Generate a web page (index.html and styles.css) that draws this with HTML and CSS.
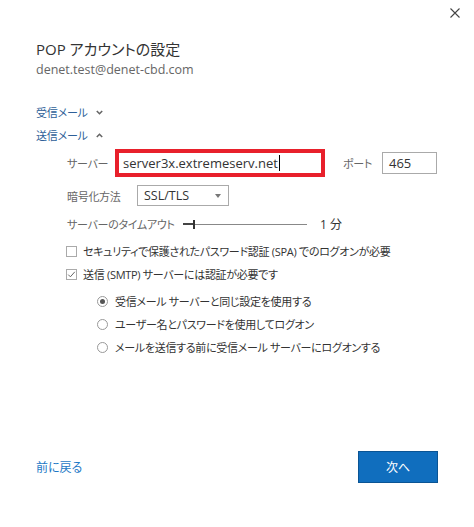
FILE: index.html
```html
<!DOCTYPE html>
<html lang="ja">
<head>
<meta charset="utf-8">
<title>POP アカウントの設定</title>
<link rel="stylesheet" href="styles.css">
</head>
<body>
<div class="dialog">
  <div class="topbar">
    <button class="close" aria-label="閉じる">
      <svg width="10" height="10" viewBox="0 0 10 10"><path d="M0.5 0.5 L9.5 9.5 M9.5 0.5 L0.5 9.5" stroke="#444" stroke-width="1.1" fill="none"/></svg>
    </button>
  </div>
  <h1 class="title">POP アカウントの設定</h1>
  <div class="email">denet.test@denet-cbd.com</div>

  <div class="toggle toggle-first">受信メール
    <svg class="chev" width="7" height="5" viewBox="0 0 7 5"><path d="M0.8 1 L3.5 3.7 L6.2 1" stroke="#666" stroke-width="1.6" fill="none"/></svg>
  </div>
  <div class="toggle">送信メール
    <svg class="chev" width="7" height="5" viewBox="0 0 7 5"><path d="M0.8 4 L3.5 1.3 L6.2 4" stroke="#666" stroke-width="1.6" fill="none"/></svg>
  </div>

  <div class="outgoing">
    <div class="row row-server">
      <span class="label lbl-server">サーバー</span>
      <div class="textbox server-box">server3x.extremeserv.net<span class="caret"></span></div>
      <span class="label lbl-port">ポート</span>
      <div class="textbox port-box">465</div>
    </div>
    <div class="row row-enc">
      <span class="label lbl-enc">暗号化方法</span>
      <div class="select">SSL/TLS<span class="arrow"></span></div>
    </div>
    <div class="row row-timeout">
      <span class="label lbl-timeout">サーバーのタイムアウト</span>
      <div class="slider"><span class="fill"></span><span class="thumb"></span></div>
      <span class="slider-value">1 分</span>
    </div>

    <div class="check check-first"><span class="box"></span><span>セキュリティで保護されたパスワード認証 (SPA) でのログオンが必要</span></div>
    <div class="check"><span class="box checked">
      <svg width="9" height="9" viewBox="0 0 9 9"><path d="M1.2 4.6 L3.4 6.8 L7.8 1.8" stroke="#666" stroke-width="1" fill="none"/></svg>
    </span><span>送信 (SMTP) サーバーには認証が必要です</span></div>

    <div class="radios">
      <div class="radio"><span class="circle on"></span><span>受信メール サーバーと同じ設定を使用する</span></div>
      <div class="radio"><span class="circle"></span><span>ユーザー名とパスワードを使用してログオン</span></div>
      <div class="radio"><span class="circle"></span><span>メールを送信する前に受信メール サーバーにログオンする</span></div>
    </div>
  </div>

  <div class="footer">
    <a class="back" href="#">前に戻る</a>
    <button class="next">次へ</button>
  </div>
</div>
</body>
</html>
```

FILE: styles.css
```css
* { box-sizing: border-box; }
html, body { margin: 0; padding: 0; background: #fff; }
body {
  font-family: "Open Sans", "Noto Sans CJK JP", sans-serif;
  font-size: 11px;
  color: #333;
  font-feature-settings: "palt";
}
.dialog {
  width: 474px;
  height: 527px;
  display: flex;
  flex-direction: column;
  padding: 0 36px 44px 36px;
}
.topbar {
  display: flex;
  justify-content: flex-end;
  margin-right: -22px;
  padding-top: 8px;
}
.close {
  border: 0;
  background: none;
  padding: 0;
  width: 10px;
  height: 10px;
  display: block;
}
.close svg { display: block; }
.title {
  margin: 20px 0 0 0;
  font-size: 15px;
  font-weight: normal;
  line-height: 22px;
  color: #333;
}
.email {
  line-height: 20px;
  font-size: 12.5px;
  color: #666;
}
.toggle {
  line-height: 23px;
  font-size: 11px;
  letter-spacing: -0.2px;
  color: #2e5f98;
  display: flex;
  align-items: center;
  gap: 8px;
}
.toggle-first { margin-top: 21px; }
.chev { display: block; }
.outgoing { padding-left: 31px; }
.row { display: flex; align-items: center; }
.label { color: #666; white-space: nowrap; letter-spacing: -0.3px; }
.row-server { margin-top: 2px; }
.lbl-server { width: 48px; }
.textbox {
  border: 1px solid #aaa;
  color: #333;
  display: flex;
  align-items: center;
}
.server-box {
  width: 210px;
  height: 28px;
  border: 4px solid #e8202b;
  padding-left: 4px;
  font-size: 13px;
}
.caret {
  display: inline-block;
  width: 1px;
  height: 16px;
  background: #000;
  margin-left: 1px;
}
.lbl-port { margin-left: 18px; width: 39px; }
.port-box {
  width: 55px;
  height: 22px;
  padding-left: 6px;
  font-size: 13px;
}
.row-enc { margin-top: 8px; }
.lbl-enc { width: 70px; }
.select {
  width: 92px;
  height: 21px;
  border: 1px solid #aaa;
  display: flex;
  align-items: center;
  justify-content: space-between;
  padding: 0 7px 0 6px;
  font-size: 12.5px;
  color: #333;
}
.arrow {
  width: 0;
  height: 0;
  border-left: 3.5px solid transparent;
  border-right: 3.5px solid transparent;
  border-top: 4px solid #777;
}
.row-timeout { margin-top: 8px; height: 20px; }
.lbl-timeout { width: 116px; }
.slider {
  position: relative;
  width: 124px;
  height: 9px;
}
.slider::before {
  content: "";
  position: absolute;
  left: 0; right: 0; top: 4px;
  height: 1px;
  background: #888;
}
.slider .fill {
  position: absolute;
  left: 0; top: 3px;
  width: 10px;
  height: 2px;
  background: #444;
}
.slider .thumb {
  position: absolute;
  left: 10px; top: 0;
  width: 2px;
  height: 9px;
  background: #333;
}
.slider-value { margin-left: 13px; color: #333; font-size: 12px; }
.check, .radio {
  display: flex;
  align-items: center;
  line-height: 23px;
  color: #333;
  letter-spacing: -0.3px;
}
.check-first { margin-top: 6px; }
.check { margin-left: -1px; }
.box {
  width: 11px;
  height: 11px;
  border: 1px solid #aaa;
  margin-right: 6px;
  display: flex;
  align-items: center;
  justify-content: center;
}
.box svg { display: block; }
.radios { margin-top: 4px; padding-left: 30px; }
.circle {
  width: 11px;
  height: 11px;
  border: 1px solid #999;
  border-radius: 50%;
  margin-right: 7px;
  display: flex;
  align-items: center;
  justify-content: center;
}
.circle.on::after {
  content: "";
  width: 5px;
  height: 5px;
  border-radius: 50%;
  background: #555;
}
.footer {
  margin-top: auto;
  display: flex;
  justify-content: space-between;
  align-items: center;
}
.back {
  color: #1e79c6;
  text-decoration: none;
  font-size: 12px;
}
.next {
  width: 80px;
  height: 32px;
  background: #106ebe;
  border: 1px solid #0a5494;
  color: #fff;
  font-family: inherit;
  font-size: 12px;
  padding: 0;
}
```
